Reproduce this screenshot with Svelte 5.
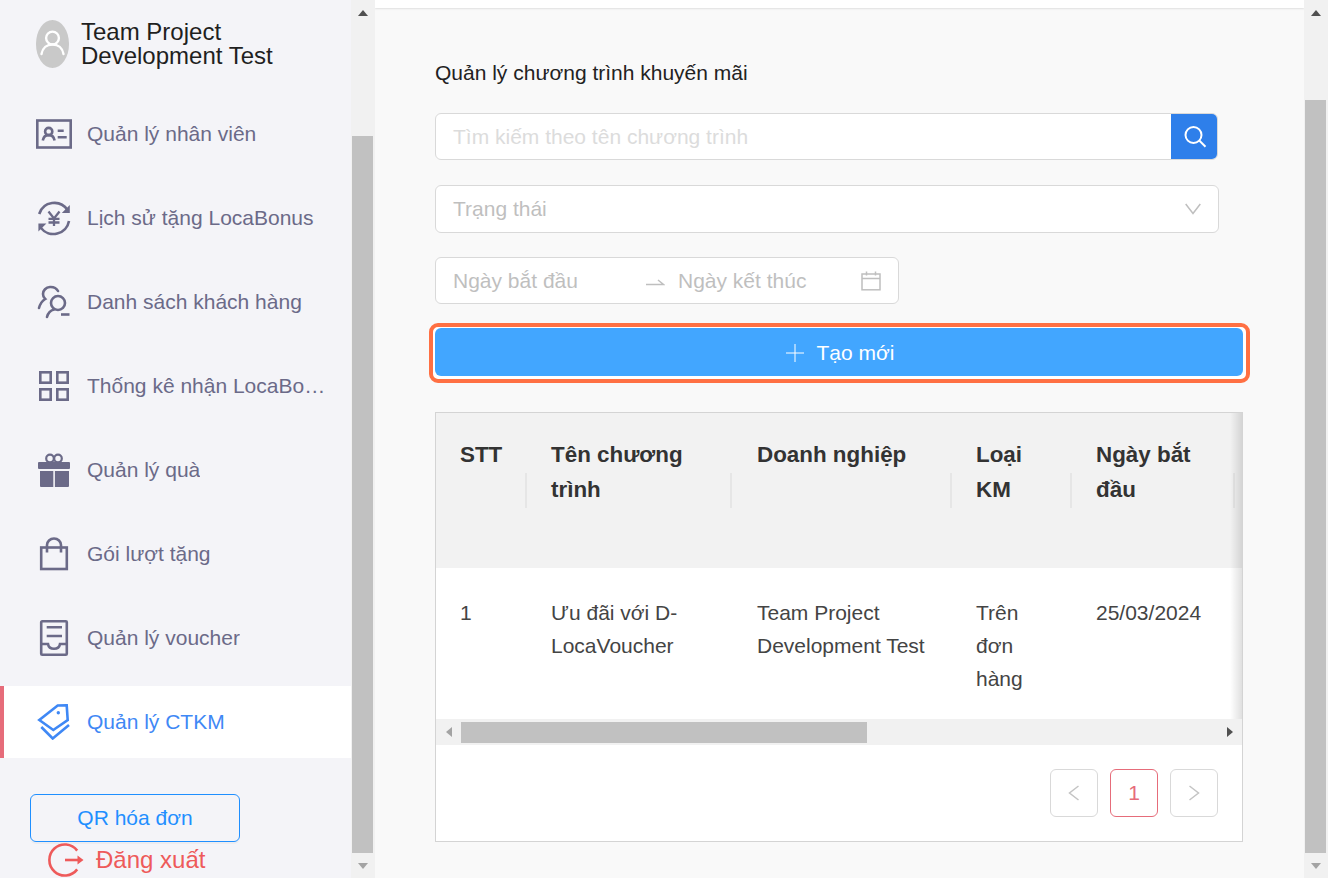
<script>
  const menu = [
    { icon: 'card', label: 'Quản lý nhân viên' },
    { icon: 'yen', label: 'Lịch sử tặng LocaBonus' },
    { icon: 'customer', label: 'Danh sách khách hàng' },
    { icon: 'grid', label: 'Thống kê nhận LocaBonus' },
    { icon: 'gift', label: 'Quản lý quà' },
    { icon: 'bag', label: 'Gói lượt tặng' },
    { icon: 'voucher', label: 'Quản lý voucher' },
    { icon: 'tag', label: 'Quản lý CTKM', active: true }
  ];

  const columns = ['STT', 'Tên chương trình', 'Doanh nghiệp', 'Loại KM', 'Ngày bắt đầu', ''];
  const row = ['1', 'Ưu đãi với D-LocaVoucher', 'Team Project Development Test', 'Trên đơn hàng', '25/03/2024', ''];
</script>

<div class="page">
  <aside class="sidebar">
    <div class="profile">
      <div class="avatar">
        <svg width="33" height="48" viewBox="0 0 33 48" fill="none" stroke="#fff" stroke-width="2.4">
          <circle cx="16.5" cy="18" r="6.4" />
          <path d="M5.5 34c1-6 5.500-9.500 11-9.500s10 3.500 11 9.500" stroke-linecap="round" />
        </svg>
      </div>
      <div class="company">Team Project Development Test</div>
    </div>

    <nav class="menu">
      {#each menu as item}
        <div class="menu-item" class:active={item.active}>
          <svg class="menu-icon" width="36" height="36" viewBox="0 0 36 36" fill="none" stroke="currentColor" stroke-width="2.600">
            {#if item.icon === 'card'}
              <rect x="1.300" y="4.500" width="33.400" height="27" />
              <circle cx="12.700" cy="15.500" r="3.600" />
              <path d="M6.800 24.500c.6-3.600 2.800-5.400 5.900-5.400s5.300 1.800 5.900 5.400" />
              <path d="M21.700 14.800h6M21.700 21.300h9" />
            {:else if item.icon === 'yen'}
              <path d="M3.200 14A15.800 15.800 0 0 1 31.500 10" />
              <path d="M33 21A15.800 15.800 0 0 1 5 28" />
              <path d="M33.800 5v8h-8zM2.400 31.500v-8h8z" fill="currentColor" stroke="none" />
              <path d="M12.500 11.500l5.500 7 5.500-7M12.500 18.800h11M12.500 22.500h11M18 18.500V26" stroke-width="2.300" />
            {:else if item.icon === 'customer'}
              <path d="M22 7c-1.500-2.800-4.500-4.200-8-4-4 .3-7 3.300-7 7 0 2 .8 3.800 2.200 5C6 17 4 20.300 3 24" stroke-linecap="round" />
              <circle cx="22" cy="19" r="7" />
              <path d="M11 33c1-4 3.500-6.600 7-7.500" stroke-linecap="round" />
              <path d="M25 30.500h8.500" />
            {:else if item.icon === 'grid'}
              <rect x="4.300" y="4.300" width="10.400" height="10.400" />
              <rect x="21.300" y="4.300" width="10.400" height="10.400" />
              <rect x="4.300" y="21.300" width="10.400" height="10.400" />
              <rect x="21.300" y="21.300" width="10.400" height="10.400" />
            {:else if item.icon === 'gift'}
              <circle cx="14" cy="6.500" r="3.800" stroke-width="2.200" />
              <circle cx="22" cy="6.500" r="3.800" stroke-width="2.200" />
              <rect x="2" y="10" width="32" height="7" rx="1" fill="currentColor" stroke="none" />
              <path d="M4 19h13.300v16H5a1 1 0 0 1-1-1zM18.900 19H33v15a1 1 0 0 1-1 1H18.900z" fill="currentColor" stroke="none" />
            {:else if item.icon === 'bag'}
              <rect x="5.200" y="11.500" width="25.600" height="21.500" />
              <path d="M11 16.500V9c0-3.500 3-6.500 7-6.500s7 3 7 6.500v7.500" />
            {:else if item.icon === 'voucher'}
              <rect x="5.200" y="1.300" width="25.600" height="33.400" rx="1" />
              <path d="M10.700 7.300H26M10.700 16H26" />
              <path d="M5.200 24H12c.5 3 3 4.800 6 4.800s5.500-1.800 6-4.800h6.800" />
            {:else if item.icon === 'tag'}
              <path d="M3.300 16L21.700 1.500l9-.2 1 14.700L17.300 26z" />
              <circle cx="22.300" cy="8.700" r="1.700" fill="currentColor" stroke="none" />
              <path d="M5.300 23l11.400 11.500L33 21" />
            {/if}
          </svg>
          <span class="menu-label">{item.label}</span>
        </div>
      {/each}
    </nav>

    <button class="qr-button">QR hóa đơn</button>

    <div class="logout">
      <svg width="36" height="36" viewBox="0 0 36 36" fill="none" stroke="currentColor" stroke-width="2.600">
        <path d="M29.200 8.600A15.500 15.500 0 1 0 29.200 27.400" />
        <path d="M17 18h13" />
        <path d="M29.500 13.500l6 4.500-6 4.500z" fill="currentColor" stroke="none" />
      </svg>
      <span>Đăng xuất</span>
    </div>
  </aside>

  <div class="scrollbar">
    <div class="arrow"><i class="tri up"></i></div>
    <div class="thumb side-thumb"></div>
    <div class="arrow end"><i class="tri down"></i></div>
  </div>

  <main class="main">
    <div class="topbar"></div>
    <div class="content">
      <h1>Quản lý chương trình khuyến mãi</h1>

      <div class="field search">
        <span class="placeholder faint">Tìm kiếm theo tên chương trình</span>
        <button class="search-button" aria-label="Tìm kiếm">
          <svg width="24" height="24" viewBox="0 0 24 24" fill="none" stroke="#fff" stroke-width="2">
            <circle cx="10.500" cy="10" r="8" />
            <path d="M16.500 15.800l6 6" />
          </svg>
        </button>
      </div>

      <div class="field status">
        <span class="placeholder">Trạng thái</span>
        <svg width="16" height="12" viewBox="0 0 16 12" fill="none" stroke="#bfbfbf" stroke-width="1.500">
          <path d="M.7 1l7.300 9.500L15.300 1" />
        </svg>
      </div>

      <div class="field dates">
        <span class="placeholder date-from">Ngày bắt đầu</span>
        <svg class="date-arrow" width="20" height="8" viewBox="0 0 20 8" fill="none" stroke="#bfbfbf" stroke-width="1.500">
          <path d="M1 6.500h17.500L13 2" />
        </svg>
        <span class="placeholder date-to">Ngày kết thúc</span>
        <svg width="20" height="20" viewBox="0 0 20 20" fill="none" stroke="#bfbfbf" stroke-width="1.500">
          <rect x="1" y="3" width="18" height="15.800" />
          <path d="M1 7.500h18M5.500 .5v4M14.500 .5v4" />
        </svg>
      </div>

      <div class="create-wrap">
        <div class="create-ring"></div>
        <button class="create">
          <svg width="18" height="18" viewBox="0 0 18 18" stroke="#fff" stroke-width="1">
            <path d="M9 0v18M0 9h18" />
          </svg>
          <span>Tạo mới</span>
        </button>
      </div>

      <section class="table-card">
        <div class="table-scroll">
          <table>
            <colgroup>
              <col style="width: 91px" />
              <col style="width: 205px" />
              <col style="width: 220px" />
              <col style="width: 120px" />
              <col style="width: 163px" />
              <col style="width: 300px" />
            </colgroup>
            <thead>
              <tr>
                {#each columns as col}
                  <th>{col}</th>
                {/each}
              </tr>
            </thead>
            <tbody>
              <tr>
                {#each row as cell}
                  <td>{cell}</td>
                {/each}
              </tr>
            </tbody>
          </table>
        </div>

        <div class="hbar">
          <div class="harrow"><i class="tri left"></i></div>
          <div class="hthumb"></div>
          <div class="harrow end"><i class="tri right"></i></div>
        </div>

        <div class="pagination">
          <button class="page-btn" aria-label="Trang trước">
            <svg width="12" height="16" viewBox="0 0 12 16" fill="none" stroke="#c4c4c4" stroke-width="1.500"><path d="M10.500 1L1.500 8l9 7" /></svg>
          </button>
          <button class="page-btn current">1</button>
          <button class="page-btn" aria-label="Trang sau">
            <svg width="12" height="16" viewBox="0 0 12 16" fill="none" stroke="#c4c4c4" stroke-width="1.500"><path d="M1.500 1l9 7-9 7" /></svg>
          </button>
        </div>
      </section>
    </div>
  </main>

  <div class="scrollbar main-bar">
    <div class="arrow"><i class="tri up"></i></div>
    <div class="thumb main-thumb"></div>
    <div class="arrow end"><i class="tri down"></i></div>
  </div>
</div>

<style>
  :global(body) {
    overflow: hidden;
    font-family: 'Liberation Sans', Arial, sans-serif;
  }

  .page {
    display: flex;
    width: 1328px;
    height: 878px;
    overflow: hidden;
  }

  button {
    font-family: inherit;
    cursor: pointer;
  }

  /* sidebar */
  .sidebar {
    flex: 0 0 351px;
    height: 878px;
    overflow: hidden;
    background: #f4f4f8;
  }

  .profile {
    display: flex;
    align-items: center;
    gap: 12px;
    height: 48px;
    margin: 20px 0 30px 36px;
  }

  .avatar {
    width: 33px;
    height: 48px;
    border-radius: 50%;
    background: #c9c9c9;
  }

  .avatar svg {
    display: block;
  }

  .company {
    width: 220px;
    font-size: 24px;
    line-height: 24px;
    color: #1f1f1f;
  }

  .menu {
    display: flex;
    flex-direction: column;
    gap: 12px;
  }

  .menu-item {
    display: flex;
    align-items: center;
    gap: 15px;
    height: 72px;
    padding: 0 25px 0 36px;
    font-size: 21px;
    color: #6b6a88;
  }

  .menu-item.active {
    padding-left: 32px;
    border-left: 4px solid #e66c7a;
    background: #fff;
    color: #3f88f5;
  }

  .menu-icon {
    flex: none;
  }

  .menu-label {
    overflow: hidden;
    white-space: nowrap;
    text-overflow: ellipsis;
  }

  .qr-button {
    display: block;
    width: 210px;
    height: 48px;
    margin: 36px 0 0 30px;
    border: 1px solid #1f8fff;
    border-radius: 6px;
    background: transparent;
    box-shadow: 0 2px 0 rgba(0, 0, 0, 0.03);
    font-size: 21px;
    color: #1f8fff;
  }

  .logout {
    display: flex;
    align-items: center;
    gap: 12px;
    height: 36px;
    margin-left: 48px;
    font-size: 24px;
    color: #ee5a5a;
  }

  /* scrollbars */
  .scrollbar {
    flex: 0 0 24px;
    display: flex;
    flex-direction: column;
    height: 878px;
    background: #f1f1f1;
  }

  .arrow {
    display: flex;
    justify-content: center;
    align-items: center;
    height: 26px;
  }

  .arrow.end {
    height: 25px;
    margin-top: auto;
  }

  .thumb {
    width: 21px;
    margin-left: 1px;
    background: #c1c1c1;
  }

  .side-thumb {
    height: 717px;
    margin-top: 110px;
  }

  .main-thumb {
    height: 753px;
    margin-top: 74px;
  }

  .tri {
    display: block;
    width: 0;
    height: 0;
    border: 5.500px solid transparent;
  }

  .tri.up {
    border-top: 0;
    border-bottom: 6px solid #505050;
  }

  .tri.down {
    border-bottom: 0;
    border-top: 6px solid #a3a3a3;
  }

  .tri.left {
    border-left: 0;
    border-right: 6px solid #a3a3a3;
  }

  .tri.right {
    border-right: 0;
    border-left: 6px solid #505050;
  }

  /* main */
  .main {
    flex: 1;
    min-width: 0;
    height: 878px;
    overflow: hidden;
    background: #f9f9f9;
  }

  .topbar {
    height: 8px;
    background: #fff;
    box-shadow: 0 1px 2px rgba(0, 0, 0, 0.1);
  }

  .content {
    width: 808px;
    padding: 53px 0 0 60px;
  }

  h1 {
    margin: 0 0 28px;
    font-size: 21px;
    font-weight: 400;
    line-height: 24px;
    color: #222;
  }

  .field {
    display: flex;
    align-items: center;
    box-sizing: border-box;
    border: 1px solid #d9d9d9;
    border-radius: 6px;
    background: #fff;
    font-size: 21px;
  }

  .placeholder {
    color: #bfbfbf;
  }

  .placeholder.faint {
    color: #dcdcdc;
  }

  .search {
    justify-content: space-between;
    width: 783px;
    height: 47px;
    padding-left: 17px;
    overflow: hidden;
  }

  .search-button {
    width: 47px;
    height: 47px;
    margin-right: -1px;
    padding: 0;
    border: 0;
    background: #2e7fea;
    display: flex;
    align-items: center;
    justify-content: center;
  }

  .status {
    justify-content: space-between;
    width: 784px;
    height: 48px;
    margin-top: 25px;
    padding: 0 17px;
  }

  .dates {
    width: 464px;
    height: 47px;
    margin-top: 24px;
    padding: 0 17px;
  }

  .date-from {
    width: 192px;
  }

  .date-arrow {
    flex: none;
    margin-top: 3px;
  }

  .date-to {
    flex: 1;
    margin-left: 13px;
  }

  .create-wrap {
    position: relative;
    width: 808px;
    height: 48px;
    margin-top: 24px;
  }

  .create-ring {
    position: absolute;
    inset: -5px -7px -7px -6px;
    border: 4px solid #ff7043;
    border-radius: 9px;
    background: #fff;
  }

  .create {
    position: relative;
    display: flex;
    align-items: center;
    justify-content: center;
    gap: 13px;
    width: 100%;
    height: 100%;
    padding: 2px 0 0 2px;
    border: 0;
    border-radius: 6px;
    background: #42a6ff;
    font-size: 21px;
    color: #fff;
  }

  /* table */
  .table-card {
    box-sizing: border-box;
    width: 808px;
    height: 430px;
    margin-top: 36px;
    border: 1px solid #d4d4d4;
    background: #fff;
  }

  .table-scroll {
    position: relative;
    overflow: hidden;
    height: 306px;
  }

  .table-scroll::after {
    content: '';
    position: absolute;
    top: 0;
    right: 0;
    bottom: 0;
    width: 12px;
    background: linear-gradient(to right, rgba(0, 0, 0, 0), rgba(0, 0, 0, 0.12));
  }

  table {
    width: 1099px;
    table-layout: fixed;
    border-collapse: collapse;
  }

  th {
    position: relative;
    box-sizing: border-box;
    height: 155px;
    padding: 24px 24px 0 24px;
    vertical-align: top;
    text-align: left;
    background: #f2f2f2;
    font-size: 22.400px;
    font-weight: 700;
    line-height: 35px;
    color: #333;
  }

  th::before {
    content: '';
    position: absolute;
    top: 60px;
    right: 0;
    width: 2px;
    height: 35px;
    background: #e6e6e6;
  }

  th:last-child::before {
    display: none;
  }

  th:nth-child(3),
  td:nth-child(3) {
    padding-left: 25px;
  }

  td {
    box-sizing: border-box;
    height: 151px;
    padding: 28px 24px 0 24px;
    vertical-align: top;
    font-size: 21px;
    line-height: 33px;
    color: #444;
  }

  .hbar {
    display: flex;
    align-items: center;
    height: 26px;
    background: #f1f1f1;
  }

  .harrow {
    flex: 0 0 25px;
    display: flex;
    align-items: center;
    justify-content: center;
    height: 100%;
  }

  .harrow.end {
    margin-left: auto;
  }

  .hthumb {
    width: 406px;
    height: 21px;
    background: #c1c1c1;
  }

  .pagination {
    display: flex;
    justify-content: flex-end;
    gap: 12px;
    padding: 24px 24px 0 0;
  }

  .page-btn {
    display: flex;
    align-items: center;
    justify-content: center;
    width: 48px;
    height: 48px;
    padding: 0;
    border: 1px solid #d9d9d9;
    border-radius: 6px;
    background: #fff;
    font-size: 21px;
  }

  .page-btn.current {
    border-color: #e66c7a;
    color: #e66c7a;
  }
</style>
